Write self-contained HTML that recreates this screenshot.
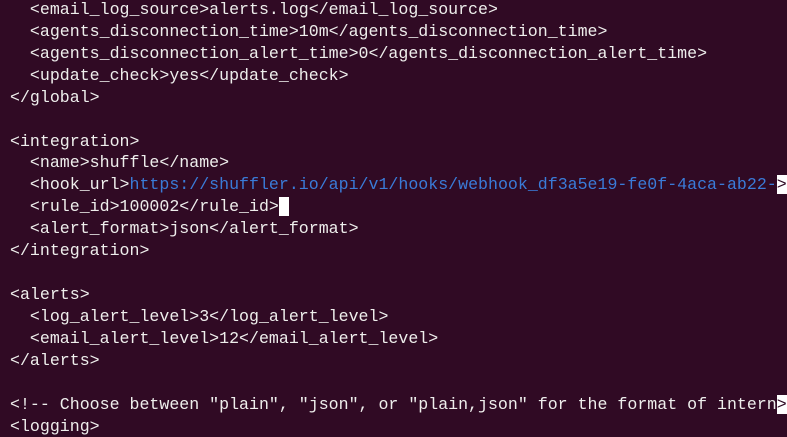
<!DOCTYPE html>
<html><head><meta charset="utf-8"><style>
html,body{margin:0;padding:0;width:787px;height:436px;overflow:hidden;background:#300a24;}
pre{margin:0;position:absolute;left:10px;top:-1px;font-family:"Liberation Mono",monospace;font-size:16.6px;line-height:21.92px;color:#eeeeec;white-space:pre;}
.b{color:#3a7bd8}
.cur{background:#ffffff;color:#300a24}
</style></head><body>
<pre>  &lt;email_log_source&gt;alerts.log&lt;/email_log_source&gt;
  &lt;agents_disconnection_time&gt;10m&lt;/agents_disconnection_time&gt;
  &lt;agents_disconnection_alert_time&gt;0&lt;/agents_disconnection_alert_time&gt;
  &lt;update_check&gt;yes&lt;/update_check&gt;
&lt;/global&gt;

&lt;integration&gt;
  &lt;name&gt;shuffle&lt;/name&gt;
  &lt;hook_url&gt;<span class="b">https://shuffler.io/api/v1/hooks/webhook_df3a5e19-fe0f-4aca-ab22-</span><span class="cur">&gt;</span>
  &lt;rule_id&gt;100002&lt;/rule_id&gt;<span class="cur"> </span>
  &lt;alert_format&gt;json&lt;/alert_format&gt;
&lt;/integration&gt;

&lt;alerts&gt;
  &lt;log_alert_level&gt;3&lt;/log_alert_level&gt;
  &lt;email_alert_level&gt;12&lt;/email_alert_level&gt;
&lt;/alerts&gt;

&lt;!-- Choose between "plain", "json", or "plain,json" for the format of intern<span class="cur">&gt;</span>
&lt;logging&gt;</pre>
</body></html>
